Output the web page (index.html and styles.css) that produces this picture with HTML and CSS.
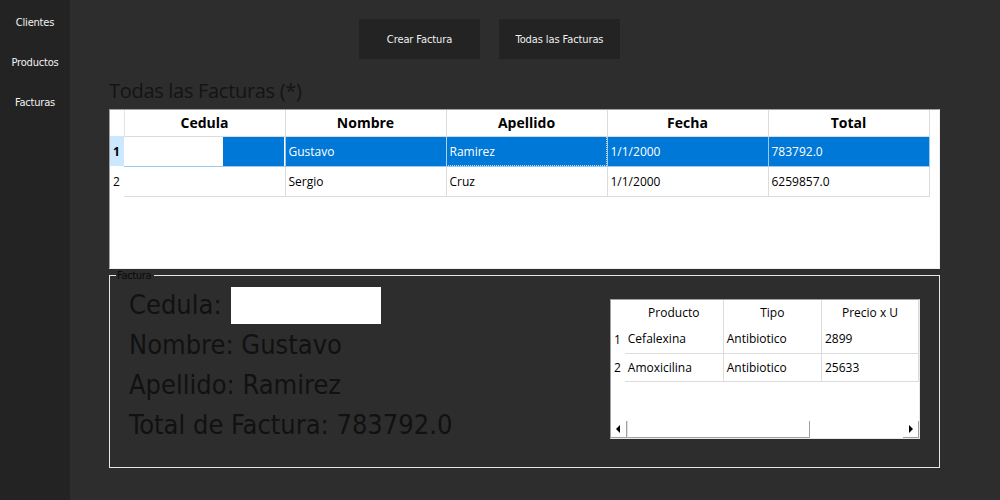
FILE: index.html
```html
<!DOCTYPE html>
<html>
<head>
<meta charset="utf-8">
<link rel="stylesheet" href="styles.css">
</head>
<body>
<div class="app">
  <nav class="sidebar">
    <div class="nav-item">Clientes</div>
    <div class="nav-item">Productos</div>
    <div class="nav-item">Facturas</div>
  </nav>
  <main class="main">
    <div class="toolbar">
      <button class="btn">Crear Factura</button>
      <button class="btn">Todas las Facturas</button>
    </div>
    <h1 class="title">Todas las Facturas (*)</h1>
    <div class="grid-box">
      <table class="grid">
        <thead>
          <tr>
            <th class="rh"></th>
            <th>Cedula</th>
            <th>Nombre</th>
            <th>Apellido</th>
            <th>Fecha</th>
            <th>Total</th>
          </tr>
        </thead>
        <tbody>
          <tr class="sel">
            <td class="rh rh-sel">1</td>
            <td class="redact"><span class="redact-white"></span><span class="redact-blue"></span></td>
            <td>Gustavo</td>
            <td class="focus">Ramirez</td>
            <td>1/1/2000</td>
            <td>783792.0</td>
          </tr>
          <tr>
            <td class="rh">2</td>
            <td></td>
            <td>Sergio</td>
            <td>Cruz</td>
            <td>1/1/2000</td>
            <td>6259857.0</td>
          </tr>
        </tbody>
      </table>
    </div>
    <section class="group">
      <span class="legend">Factura</span>
      <div class="info">
        <div class="line">Cedula: <span class="blank"></span></div>
        <div class="line">Nombre: Gustavo</div>
        <div class="line">Apellido: Ramirez</div>
        <div class="line">Total de Factura: 783792.0</div>
      </div>
      <div class="mini-box">
        <div class="mini-view">
          <table class="mini">
            <thead>
              <tr><th class="mrh"></th><th>Producto</th><th>Tipo</th><th>Precio x U</th></tr>
            </thead>
            <tbody>
              <tr><td class="mrh">1</td><td>Cefalexina</td><td>Antibiotico</td><td>2899</td></tr>
              <tr><td class="mrh">2</td><td>Amoxicilina</td><td>Antibiotico</td><td>25633</td></tr>
            </tbody>
          </table>
        </div>
        <div class="hscroll">
          <div class="arrow"><svg width="5" height="8" viewBox="0 0 5 8"><path d="M4 0 L0 4 L4 8 Z" fill="#000"/></svg></div>
          <div class="thumb"></div>
          <div class="track"></div>
          <div class="arrow"><svg width="5" height="8" viewBox="0 0 5 8"><path d="M1 0 L5 4 L1 8 Z" fill="#000"/></svg></div>
        </div>
      </div>
    </section>
  </main>
</div>
</body>
</html>
```
FILE: styles.css
```css
* { box-sizing: border-box; }
html, body { margin: 0; padding: 0; }
body {
  width: 1000px;
  height: 500px;
  overflow: hidden;
  background: #2d2d2d;
  font-family: "Open Sans", "Noto Sans", sans-serif;
}
.app { display: flex; height: 500px; }
.sidebar {
  width: 70px;
  background: #232323;
  padding-top: 2px;
  flex: none;
}
.nav-item {
  height: 40px;
  line-height: 41px;
  text-align: center;
  color: #f2f2f2;
  font-size: 11px;
  font-family: "DejaVu Sans Condensed", "DejaVu Sans", sans-serif;
  letter-spacing: -0.2px;
}
.main {
  flex: 1;
  padding: 19px 0 0 39px;
  background: #2d2d2d;
}
.toolbar {
  display: flex;
  gap: 19px;
  padding-left: 250px;
}
.btn {
  width: 121px;
  height: 40px;
  background: #232323;
  border: none;
  color: #f0f0f0;
  font-size: 11px;
  font-family: "DejaVu Sans Condensed", "DejaVu Sans", sans-serif;
  letter-spacing: -0.1px;
  padding: 0;
}
.title {
  margin: 20px 0 6px 0;
  height: 24px;
  line-height: 24px;
  font-size: 20px;
  font-weight: 400;
  color: #141414;
  font-family: "Open Sans", sans-serif;
  letter-spacing: -0.3px;
}
.grid-box {
  width: 831px;
  height: 160px;
  background: #fff;
  border: 1px solid #a0a0a0;
  border-right-color: #f0f0f0;
  border-bottom-color: #f0f0f0;
}
.grid {
  border-collapse: collapse;
  table-layout: fixed;
  font-size: 12px;
  color: #000;
}
.grid th {
  height: 26px;
  width: 161px;
  font-size: 14px;
  font-weight: 700;
  text-align: center;
  border-right: 1px solid #dcdcdc;
  border-bottom: 1px solid #dcdcdc;
  padding: 0;
  font-family: "Open Sans", sans-serif;
}
.grid th.rh { width: 14px; border-bottom: none; border-right: 1px solid #e4e4e4; }
.grid td {
  height: 30px;
  padding: 0 0 0 3px;
  border-right: 1px solid #dcdcdc;
  border-bottom: 1px solid #dcdcdc;
  white-space: nowrap;
}
.grid td.rh {
  width: 14px;
  padding: 0 0 0 3px;
  border: none;
  background: #fff;
  color: #000;
}
.grid td.rh-sel { background: #cce8ff; font-weight: 700; }
.grid tr.sel td { background: #0078d7; color: #fff; border-bottom-color: #99c9ef; border-right-color: #99c9ef; }
.grid tr.sel td.rh { background: #cce8ff; color: #000; border: none; }
.grid tr.sel td.redact { padding: 0; background: #fff; }
.redact { font-size: 0; }
.redact-white { display: inline-block; width: 99px; height: 29px; background: #fff; vertical-align: top; }
.redact-blue { display: inline-block; width: 61px; height: 29px; background: #0078d7; vertical-align: top; }
.grid tr.sel td.focus { outline: 1px dotted #c0d8ef; outline-offset: -1px; }
.group {
  position: relative;
  margin-top: 6px;
  width: 831px;
  height: 193px;
  border: 1px solid #e6e6e6;
  display: flex;
  padding: 9px 0 0 19px;
}
.legend {
  position: absolute;
  top: -6px;
  left: 6px;
  padding: 0 3px 0 1px;
  background: #2d2d2d;
  color: #0a0a0a;
  font-size: 11px;
  line-height: 11px;
  height: 11px;
  font-family: "DejaVu Sans Condensed", "DejaVu Sans", sans-serif;
  letter-spacing: -0.3px;
}
.info { width: 481px; }
.line {
  height: 40px;
  line-height: 40px;
  font-size: 27px;
  color: #111;
  font-family: "DejaVu Sans Condensed", "DejaVu Sans", sans-serif;
  white-space: nowrap;
  display: flex;
  align-items: center;
}
.blank {
  display: inline-block;
  width: 150px;
  height: 37px;
  background: #fff;
  margin-left: 9px;
}
.mini-box {
  margin-top: 14px;
  width: 310px;
  height: 140px;
  background: #fff;
  border: 1px solid #a0a0a0;
  border-right-color: #e8e8e8;
  border-bottom-color: #e8e8e8;
  display: flex;
  flex-direction: column;
  overflow: hidden;
}
.mini-view { flex: 1; overflow: hidden; }
.mini {
  border-collapse: collapse;
  table-layout: fixed;
  font-size: 12px;
  color: #000;
  font-family: "Open Sans", sans-serif;
}
.mini th {
  width: 100px;
  height: 25px;
  font-weight: 400;
  text-align: center;
  padding: 0;
  border-right: 1px solid #dcdcdc;
}
.mini th.mrh, .mini td.mrh { width: 14px; border: none; padding: 0 0 0 3px; text-align: left; }
.mini td {
  height: 28px;
  padding: 0 0 0 3px;
  border-right: 1px solid #dcdcdc;
  border-bottom: 1px solid #dcdcdc;
  white-space: nowrap;
}
.hscroll {
  height: 17px;
  display: flex;
  background: #fff;
}
.arrow {
  width: 16px;
  height: 17px;
  background: #fff;
  border-right: 1px solid #a0a0a0;
  border-bottom: 1px solid #a0a0a0;
  display: flex;
  align-items: center;
  justify-content: center;
}
.thumb {
  width: 183px;
  height: 17px;
  background: #fff;
  border-left: 1px solid #e0e0e0;
  border-right: 1px solid #a0a0a0;
  border-bottom: 1px solid #a0a0a0;
}
.track { flex: 1; background: #fff; }
```
